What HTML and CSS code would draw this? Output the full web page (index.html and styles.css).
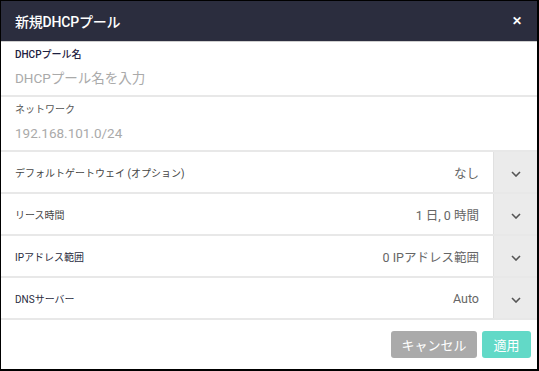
FILE: index.html
```html
<!DOCTYPE html>
<html lang="ja">
<head>
<meta charset="utf-8">
<link rel="stylesheet" href="styles.css">
</head>
<body>
<div class="dialog">
  <div class="header">
    <span class="title">新規DHCPプール</span>
    <span class="close">✕</span>
  </div>
  <div class="field">
    <div class="label strong">DHCPプール名</div>
    <div class="input placeholder">DHCPプール名を入力</div>
  </div>
  <div class="field">
    <div class="label">ネットワーク</div>
    <div class="input placeholder">192.168.101.0/24</div>
  </div>
  <div class="row">
    <div class="row-label">デフォルトゲートウェイ (オプション)</div>
    <div class="row-value">なし</div>
    <div class="toggle"><svg width="10" height="6" viewBox="0 0 10 6"><path d="M1 1 L5 5 L9 1" fill="none" stroke="#555" stroke-width="1.6"/></svg></div>
  </div>
  <div class="row">
    <div class="row-label">リース時間</div>
    <div class="row-value">1 日, 0 時間</div>
    <div class="toggle"><svg width="10" height="6" viewBox="0 0 10 6"><path d="M1 1 L5 5 L9 1" fill="none" stroke="#555" stroke-width="1.6"/></svg></div>
  </div>
  <div class="row">
    <div class="row-label dark">IPアドレス範囲</div>
    <div class="row-value">0 IPアドレス範囲</div>
    <div class="toggle"><svg width="10" height="6" viewBox="0 0 10 6"><path d="M1 1 L5 5 L9 1" fill="none" stroke="#555" stroke-width="1.6"/></svg></div>
  </div>
  <div class="row">
    <div class="row-label dark">DNSサーバー</div>
    <div class="row-value">Auto</div>
    <div class="toggle"><svg width="10" height="6" viewBox="0 0 10 6"><path d="M1 1 L5 5 L9 1" fill="none" stroke="#555" stroke-width="1.6"/></svg></div>
  </div>
  <div class="footer">
    <button class="btn cancel">キャンセル</button>
    <button class="btn apply">適用</button>
  </div>
</div>
</body>
</html>
```
FILE: styles.css
```css
* { box-sizing: border-box; }
html, body { margin: 0; padding: 0; background: #fff; }
body { font-family: Roboto, "Noto Sans CJK JP", sans-serif; }
.dialog {
  width: 539px;
  height: 371px;
  border: 1px solid #000;
  border-right-width: 2px;
  border-bottom-width: 2px;
  display: flex;
  flex-direction: column;
  background: #fff;
}
.header {
  height: 41px;
  background: #2b2d3e;
  border-bottom: 1px solid #cfcfcf;
  display: flex;
  align-items: center;
  justify-content: space-between;
  padding: 0 15px 0 14px;
  color: #fff;
}
.title { font-size: 14px; font-weight: 500; letter-spacing: -0.2px; }
.close { font-size: 12px; font-weight: 700; }
.field {
  height: 55px;
  border-bottom: 2px solid #e8e8e8;
  padding: 6px 14px 0 14px;
  display: flex;
  flex-direction: column;
}
.label { font-size: 10px; line-height: 14px; color: #555; }
.label.strong { color: #1d2040; font-weight: 500; }
.input { font-size: 13.5px; line-height: 20px; margin-top: 6px; }
.placeholder { color: #aaa; }
.row {
  height: 42px;
  border-bottom: 2px solid #e8e8e8;
  display: flex;
  align-items: stretch;
}
.row-label {
  flex: 1;
  padding-left: 14px;
  font-size: 10px;
  color: #444;
  display: flex;
  align-items: center;
}
.row-label.dark { color: #2a2c40; }
.row-value {
  font-size: 12.5px;
  color: #666;
  display: flex;
  align-items: center;
  padding-right: 14px;
}
.toggle {
  width: 44px;
  background: #ebebeb;
  border-left: 1px solid #e0e0e0;
  display: flex;
  align-items: center;
  justify-content: center;
  padding-top: 3px;
}
.footer {
  flex: 1;
  display: flex;
  justify-content: flex-end;
  align-items: center;
  gap: 5px;
  padding-right: 6px;
}
.btn {
  border: none;
  border-radius: 3px;
  height: 27px;
  color: #fff;
  font-family: Roboto, "Noto Sans CJK JP", sans-serif;
  font-size: 13px;
  padding: 0;
}
.cancel { width: 86px; background: #aaaaaa; }
.apply { width: 49px; background: #62d9c7; }
```
